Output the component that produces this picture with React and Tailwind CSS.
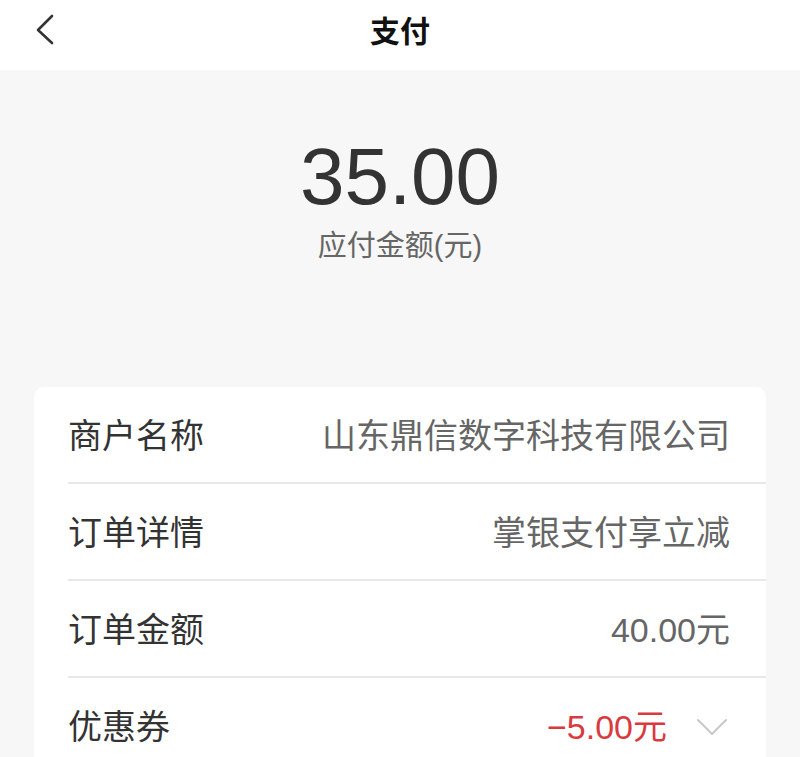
const rows = [
  { label: '商户名称', value: '山东鼎信数字科技有限公司' },
  { label: '订单详情', value: '掌银支付享立减' },
  { label: '订单金额', value: '40.00元' },
];

const cjk = "font-['Liberation_Sans','Noto_Sans_CJK_SC',sans-serif]";

function Row({ label, children, divider = true }) {
  return (
    <div>
      <div className="h-[95px] flex items-center justify-between pl-[34px] pr-[36px] pt-[2px]">
        <span className="text-[34px] text-[#333333] leading-none">{label}</span>
        {children}
      </div>
      {divider && <div className="ml-[34px] h-[2px] bg-[#e8e8e8]" />}
    </div>
  );
}

export default function App() {
  return (
    <div className={`min-h-screen bg-[#f7f7f7] ${cjk}`}>
      <header className="relative h-[70px] bg-white flex items-center justify-center pb-[6px]">
        <button className="absolute left-[28px] top-[13px] text-[#333333]">
          <svg width="34" height="34" viewBox="0 0 34 34" fill="none" stroke="currentColor" strokeWidth="2.6" strokeLinecap="round" strokeLinejoin="round">
            <path d="M24 3 L10 17 L24 30" />
          </svg>
        </button>
        <h1 className="text-[30px] font-bold text-[#111111] leading-none">支付</h1>
      </header>

      <div className="flex flex-col items-center pt-[67px]">
        <div className="text-[80px] leading-none text-[#333333] font-['Liberation_Sans',sans-serif]">35.00</div>
        <div className="mt-[15px] text-[29px] leading-none text-[#666666]">应付金额(元)</div>
      </div>

      <div className="mx-[34px] mt-[126px] bg-white rounded-[10px] overflow-hidden">
        {rows.map((r) => (
          <Row key={r.label} label={r.label}>
            <span className="text-[34px] text-[#666666] leading-none">{r.value}</span>
          </Row>
        ))}
        <Row label="优惠券" divider={false}>
          <div className="flex items-center gap-[29px] mr-[2px]">
            <span className="text-[34px] text-[#d93a40] leading-none">−5.00元</span>
            <svg width="32" height="18" viewBox="0 0 32 18" fill="none" stroke="#c8c8c8" strokeWidth="2" strokeLinecap="round" strokeLinejoin="round">
              <path d="M2 2 L16 16 L30 2" />
            </svg>
          </div>
        </Row>
      </div>
    </div>
  );
}
